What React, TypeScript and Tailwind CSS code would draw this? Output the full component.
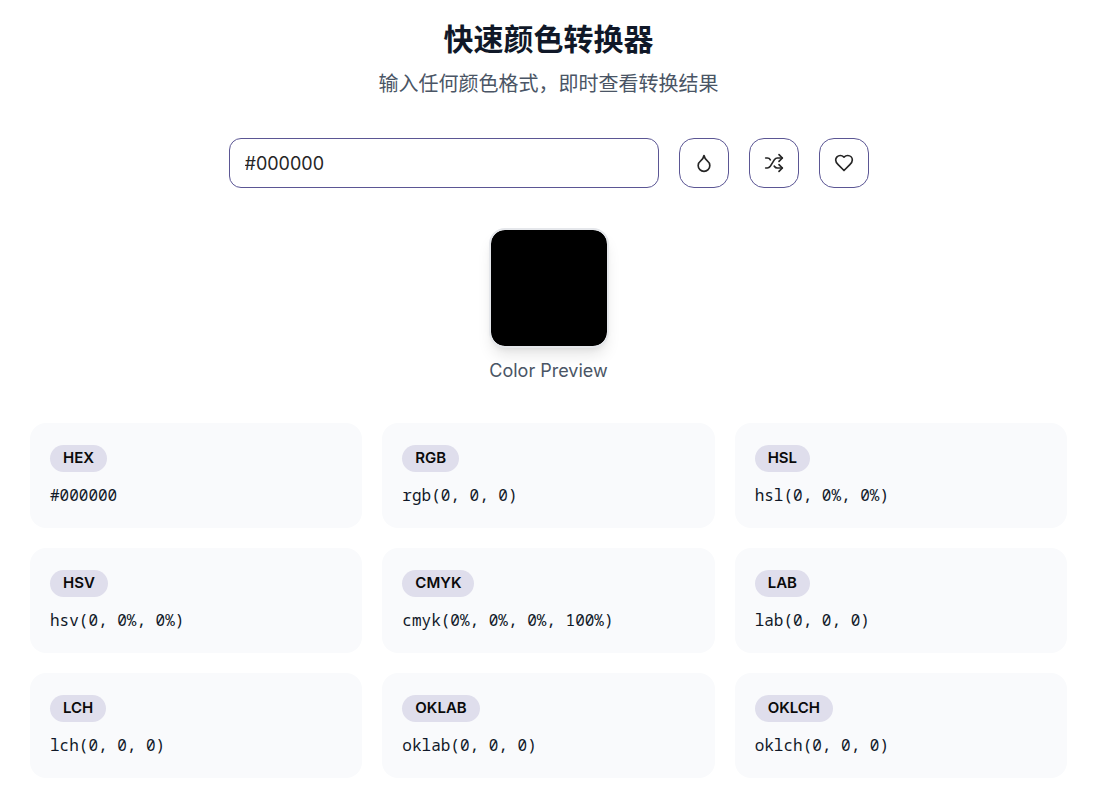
import { useState } from 'react'
import { Droplet, Shuffle } from 'lucide-react'

const FORMATS = [
  { label: 'HEX', value: '#000000' },
  { label: 'RGB', value: 'rgb(0, 0, 0)' },
  { label: 'HSL', value: 'hsl(0, 0%, 0%)' },
  { label: 'HSV', value: 'hsv(0, 0%, 0%)' },
  { label: 'CMYK', value: 'cmyk(0%, 0%, 0%, 100%)' },
  { label: 'LAB', value: 'lab(0, 0, 0)' },
  { label: 'LCH', value: 'lch(0, 0, 0)' },
  { label: 'OKLAB', value: 'oklab(0, 0, 0)' },
  { label: 'OKLCH', value: 'oklch(0, 0, 0)' },
]

function Heart({ size }: { size: number }) {
  return (
    <svg
      width={size}
      height={size}
      viewBox="0 0 24 24"
      fill="none"
      stroke="currentColor"
      strokeWidth="2"
      strokeLinecap="round"
      strokeLinejoin="round"
    >
      <path d="M19 14c1.49-1.46 3-3.21 3-5.5A5.5 5.5 0 0 0 16.5 3c-1.76 0-3 .5-4.5 2-1.5-1.5-2.74-2-4.5-2A5.5 5.5 0 0 0 2 8.5c0 2.3 1.5 4.05 3 5.5l7 7Z" />
    </svg>
  )
}

const ACTIONS = [
  { name: 'Pick color', Icon: Droplet },
  { name: 'Random color', Icon: Shuffle },
  { name: 'Add to favorites', Icon: Heart },
]

export default function App() {
  const [color, setColor] = useState('#000000')

  return (
    <main className="min-h-screen bg-white pt-5 pb-7 pl-[30px] pr-[37px] font-['Inter','Noto_Sans_CJK_SC',sans-serif]">
      <header className="text-center">
        <h1 className="text-3xl leading-[38px] font-bold text-gray-900">快速颜色转换器</h1>
        <p className="mt-[10px] text-xl leading-8 text-gray-600">输入任何颜色格式，即时查看转换结果</p>
      </header>

      {/* Input and actions */}
      <div className="mx-auto mt-[38px] flex max-w-[640px] gap-5">
        <input
          type="text"
          aria-label="Color"
          value={color}
          onChange={e => setColor(e.target.value)}
          className="h-[50px] min-w-0 flex-1 rounded-xl border border-[#5b5694] bg-white px-[15px] text-lg text-[#252525] outline-none"
        />
        {ACTIONS.map(({ name, Icon }) => (
          <button
            key={name}
            type="button"
            aria-label={name}
            className="flex size-[50px] shrink-0 items-center justify-center rounded-[15px] border border-[#5b5694] bg-white text-[#252525] hover:bg-gray-50"
          >
            <Icon size={20} />
          </button>
        ))}
      </div>

      {/* Preview */}
      <div className="mt-10 flex flex-col items-center gap-2">
        <div
          className="size-[120px] rounded-2xl border-2 border-gray-200 bg-clip-padding shadow-lg"
          style={{ backgroundColor: color }}
        />
        <p className="text-lg leading-[30px] text-gray-600">Color Preview</p>
      </div>

      {/* Converted values */}
      <div className="mt-[37px] grid grid-cols-3 gap-5">
        {FORMATS.map(({ label, value }) => (
          <div key={label} className="flex flex-col items-start gap-[10px] rounded-2xl bg-[#f9fafc] px-5 pt-[22px] pb-5">
            <span className="rounded-full bg-[#dfdeec] px-[13px] pb-[2px] text-[15px] leading-[25px] font-semibold text-[#0a0a0a]">
              {label}
            </span>
            <code className="font-['Noto_Sans_Mono','Liberation_Mono',monospace] text-base leading-[26px] text-gray-900">{value}</code>
          </div>
        ))}
      </div>
    </main>
  )
}
